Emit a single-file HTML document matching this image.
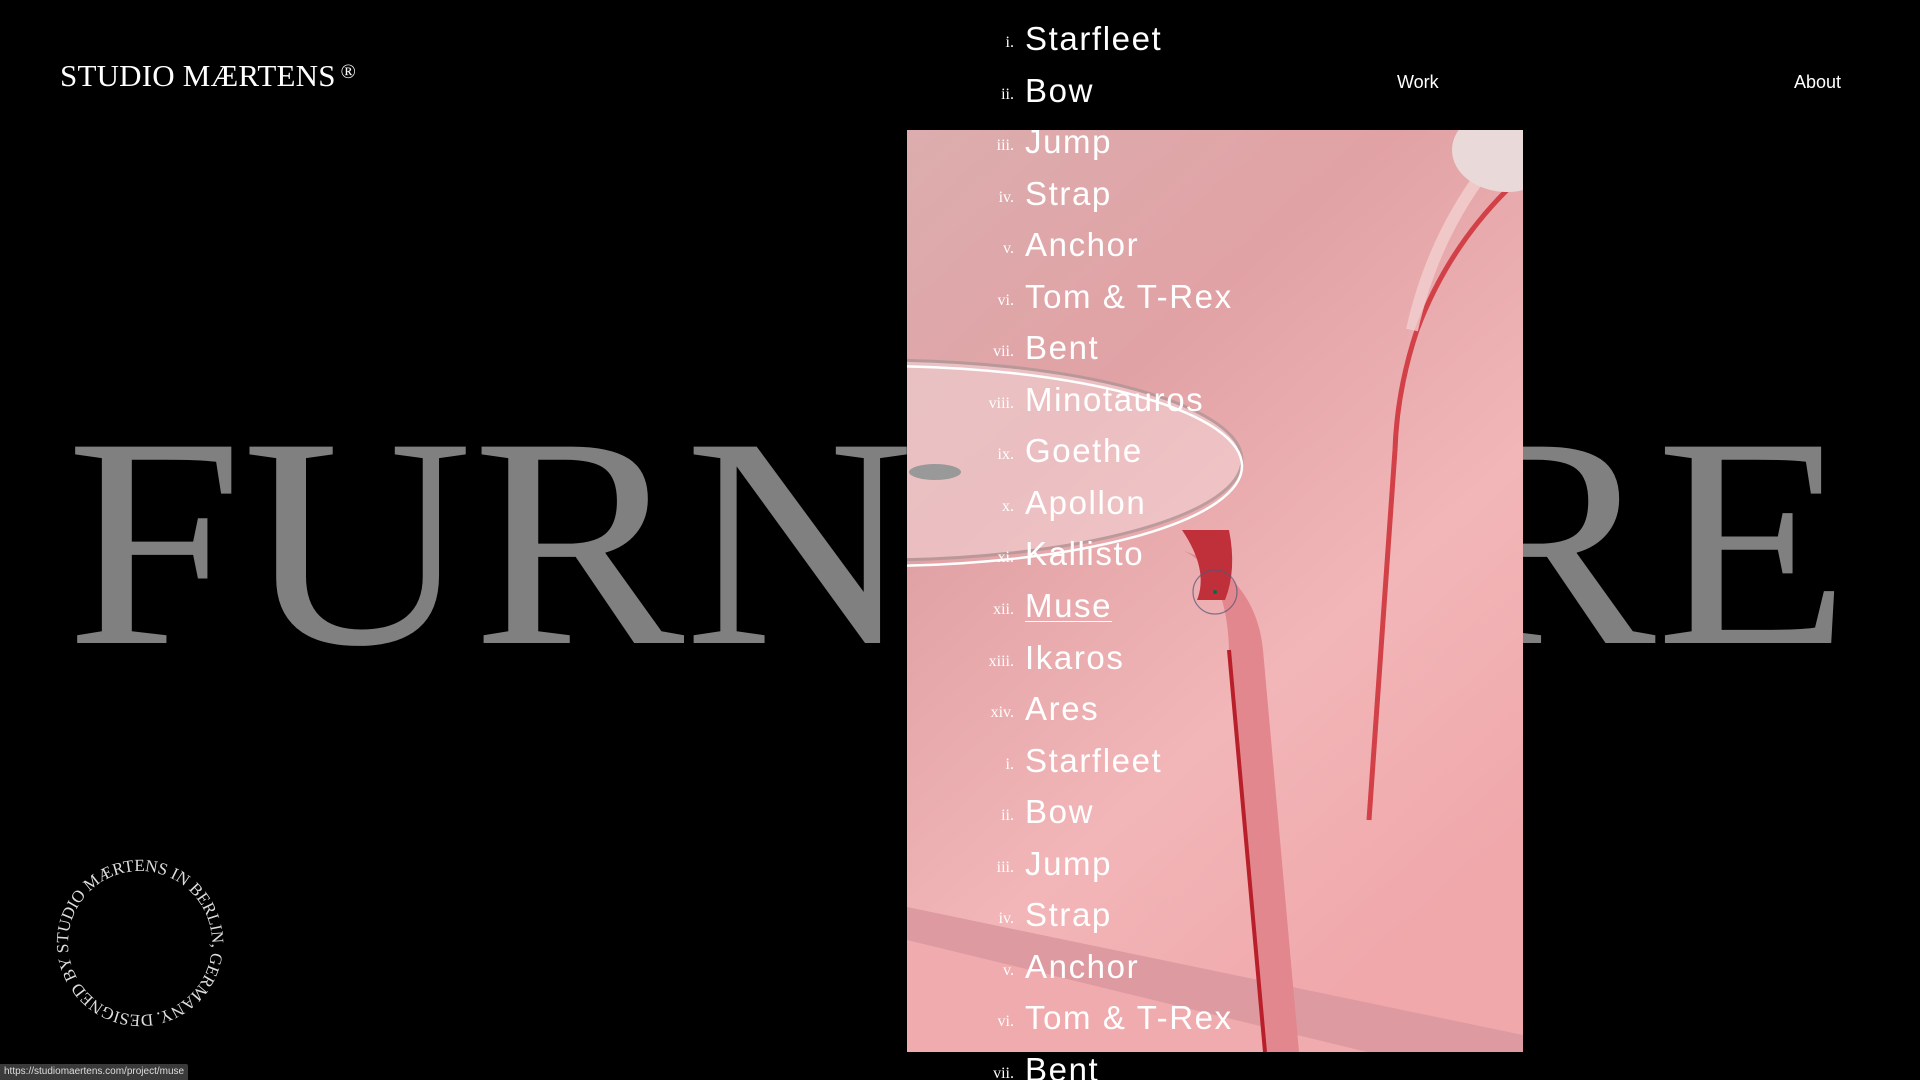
<!DOCTYPE html>
<html><head><meta charset="utf-8">
<style>
html,body{margin:0;padding:0;background:#000;width:1920px;height:1080px;overflow:hidden;position:relative;font-family:"Liberation Sans",sans-serif;}
.logo{position:absolute;left:60px;top:58px;color:#fff;font-family:"Liberation Serif",serif;font-size:31px;letter-spacing:0.2px;white-space:nowrap;}
.logo sup{font-size:20px;vertical-align:8px;margin-left:5px}
.nav{position:absolute;top:72px;color:#fff;font-size:18px;}
.big{position:absolute;left:0;top:0;}
.img{position:absolute;left:907px;top:130px;width:616px;height:922px;overflow:hidden;}
.list{position:absolute;left:0;top:0;width:1920px;}
.row{position:absolute;height:51px;width:600px;left:720px;}
.row .n{position:absolute;right:306px;bottom:10px;font-family:"Liberation Serif",serif;font-size:16px;color:#fff;text-align:right;}
.row .t{position:absolute;left:305px;bottom:4px;font-size:33px;color:#fff;white-space:nowrap;letter-spacing:1.6px}
.status{position:absolute;left:0;top:1064px;height:16px;background:#3a3a3a;color:#ddd;font-size:10px;line-height:16px;padding:0 4px;border-top-right-radius:2px}
</style></head><body>
<svg class="big" width="1920" height="1080">
<text x="66" y="643" font-family="Liberation Serif, serif" font-size="300" fill="#808080" textLength="1784" lengthAdjust="spacingAndGlyphs">FURNITURE</text>
<g transform="translate(140,943) rotate(-100)">
<defs><path id="c" d="M -72 0 A 72 72 0 1 1 72 0 A 72 72 0 1 1 -72 0"/></defs>
<text font-family="Liberation Serif, serif" font-size="17" fill="#ddd" textLength="448"><textPath href="#c" startOffset="0" textLength="448">DESIGNED BY STUDIO MÆRTENS IN BERLIN, GERMANY. </textPath></text>
</g>
</svg>
<div class="logo">STUDIO MÆRTENS<sup>®</sup></div>
<div class="nav" style="left:1397px">Work</div>
<div class="nav" style="left:1794px">About</div>
<div class="img">
<svg width="616" height="922">
<defs>
<linearGradient id="bg" x1="0" y1="0" x2="0.6" y2="1">
<stop offset="0" stop-color="#dcadae"/><stop offset="0.35" stop-color="#e1a2a5"/><stop offset="0.7" stop-color="#f2b6b8"/><stop offset="1" stop-color="#f0a8ab"/>
</linearGradient>
</defs>
<rect width="616" height="922" fill="url(#bg)"/>
<polygon points="0,777 616,905 616,922 0,922" fill="#dd9aa0"/>
<polygon points="0,810 616,960 616,922 0,922" fill="#f0abae"/>
<path d="M600 60 Q540 120 510 200 Q490 260 488 320 L462 690" stroke="#d24048" stroke-width="5" fill="none"/>
<path d="M578 40 Q525 110 505 200" stroke="#f3d0d0" stroke-width="12" fill="none" opacity="0.8"/>
<ellipse cx="600" cy="20" rx="55" ry="42" fill="#ead9d9"/>
<path d="M275 420 Q320 440 322 520 L358 922 L392 922 L356 520 Q350 460 300 430 Z" fill="#e2878d"/>
<path d="M322 520 L358 922" stroke="#b81f2a" stroke-width="4" fill="none"/>
<ellipse cx="-30" cy="330" rx="365" ry="100" fill="#f8e2e3" opacity="0.45" stroke="#8a8a8a" stroke-width="3"/>
<ellipse cx="-30" cy="336" rx="365" ry="100" fill="none" stroke="#fff" stroke-width="2.5"/>
<path d="M275 400 Q302 440 290 470 L318 470 Q330 440 322 400 Z" fill="#c0303a"/>
<ellipse cx="28" cy="342" rx="26" ry="8" fill="#999"/>
<circle cx="308" cy="462" r="22" fill="none" stroke="#557" stroke-width="1.2" opacity="0.7"/>
<circle cx="308" cy="462" r="2" fill="#164"/>
</svg>
</div>
<div class="list">
<div class="row" style="top:11px"><span class="n">i.</span><span class="t">Starfleet</span></div>
<div class="row" style="top:63px"><span class="n">ii.</span><span class="t">Bow</span></div>
<div class="row" style="top:114px"><span class="n">iii.</span><span class="t">Jump</span></div>
<div class="row" style="top:166px"><span class="n">iv.</span><span class="t">Strap</span></div>
<div class="row" style="top:217px"><span class="n">v.</span><span class="t">Anchor</span></div>
<div class="row" style="top:269px"><span class="n">vi.</span><span class="t">Tom &amp; T-Rex</span></div>
<div class="row" style="top:320px"><span class="n">vii.</span><span class="t">Bent</span></div>
<div class="row" style="top:372px"><span class="n">viii.</span><span class="t">Minotauros</span></div>
<div class="row" style="top:423px"><span class="n">ix.</span><span class="t">Goethe</span></div>
<div class="row" style="top:475px"><span class="n">x.</span><span class="t">Apollon</span></div>
<div class="row" style="top:526px"><span class="n">xi.</span><span class="t">Kallisto</span></div>
<div class="row" style="top:578px"><span class="n">xii.</span><span class="t" style="text-decoration:underline;text-decoration-thickness:1px;text-underline-offset:4px">Muse</span></div>
<div class="row" style="top:630px"><span class="n">xiii.</span><span class="t">Ikaros</span></div>
<div class="row" style="top:681px"><span class="n">xiv.</span><span class="t">Ares</span></div>
<div class="row" style="top:733px"><span class="n">i.</span><span class="t">Starfleet</span></div>
<div class="row" style="top:784px"><span class="n">ii.</span><span class="t">Bow</span></div>
<div class="row" style="top:836px"><span class="n">iii.</span><span class="t">Jump</span></div>
<div class="row" style="top:887px"><span class="n">iv.</span><span class="t">Strap</span></div>
<div class="row" style="top:939px"><span class="n">v.</span><span class="t">Anchor</span></div>
<div class="row" style="top:990px"><span class="n">vi.</span><span class="t">Tom &amp; T-Rex</span></div>
<div class="row" style="top:1042px"><span class="n">vii.</span><span class="t">Bent</span></div>
</div>
<div class="status">https://studiomaertens.com/project/muse</div>
</body></html>
